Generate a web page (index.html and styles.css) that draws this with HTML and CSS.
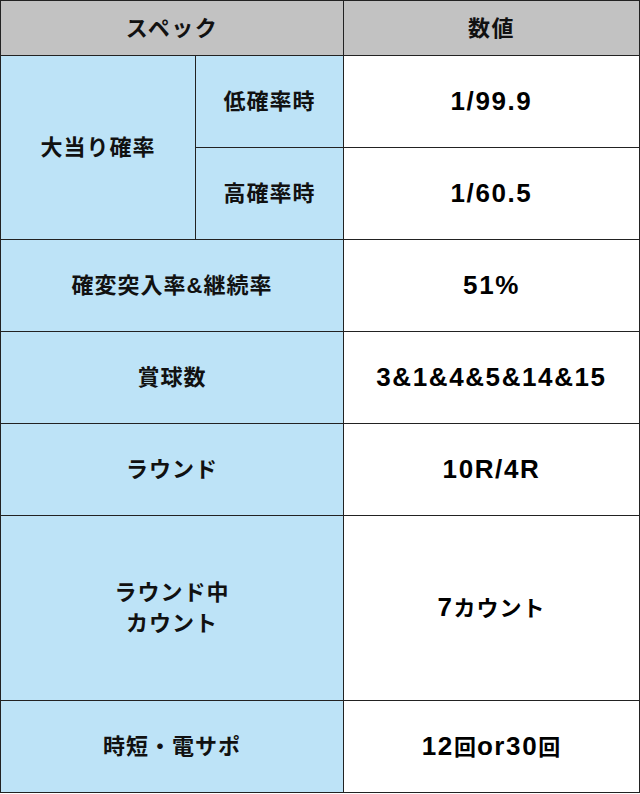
FILE: index.html
```html
<!DOCTYPE html>
<html lang="ja">
<head>
<meta charset="utf-8">
<link rel="stylesheet" href="styles.css">
</head>
<body>
<table class="spec">
  <colgroup>
    <col class="c1">
    <col class="c2">
    <col class="c3">
  </colgroup>
  <thead>
    <tr class="head">
      <th colspan="2">スペック</th>
      <th>数値</th>
    </tr>
  </thead>
  <tbody>
    <tr>
      <th rowspan="2">大当り確率</th>
      <th>低確率時</th>
      <td>1/99.9</td>
    </tr>
    <tr>
      <th>高確率時</th>
      <td>1/60.5</td>
    </tr>
    <tr>
      <th colspan="2">確変突入率&amp;継続率</th>
      <td>51%</td>
    </tr>
    <tr>
      <th colspan="2">賞球数</th>
      <td>3&amp;1&amp;4&amp;5&amp;14&amp;15</td>
    </tr>
    <tr>
      <th colspan="2">ラウンド</th>
      <td>10R/4R</td>
    </tr>
    <tr class="tall">
      <th colspan="2">ラウンド中<br>カウント</th>
      <td>7<span class="ja">カウント</span></td>
    </tr>
    <tr>
      <th colspan="2">時短・電サポ</th>
      <td>12<span class="ja">回</span>or30<span class="ja">回</span></td>
    </tr>
  </tbody>
</table>
</body>
</html>
```
FILE: styles.css
```css
html, body {
  margin: 0;
  padding: 0;
  background: #ffffff;
}
.spec {
  border-collapse: collapse;
  width: 639px;
  table-layout: fixed;
  font-family: "Liberation Sans", "Noto Sans CJK JP", sans-serif;
  font-weight: bold;
  font-size: 22px;
  color: #111;
}
.c1 { width: 195px; }
.c2 { width: 148px; }
.c3 { width: 296px; }
.spec th, .spec td {
  border: 1px solid #222;
  text-align: center;
  vertical-align: middle;
  padding: 0;
  height: 91px;
  line-height: 31px;
  letter-spacing: 1px;
}
.spec th {
  background: #bde3f7;
  font-weight: bold;
}
.spec td {
  background: #ffffff;
  font-size: 26px;
  letter-spacing: 1.6px;
  color: #000;
}
.spec td .ja {
  font-size: 22px;
  letter-spacing: 1px;
}
.spec .head th {
  background: #c2c2c2;
  height: 54px;
  font-size: 22px;
  letter-spacing: 1.5px;
}
.spec .tall th, .spec .tall td {
  height: 184px;
}
```
